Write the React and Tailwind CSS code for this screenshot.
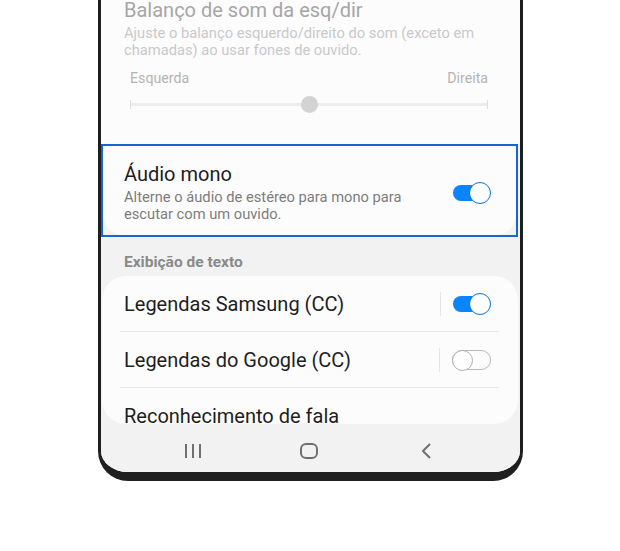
import React from 'react';

const font = { fontFamily: 'Roboto, "Noto Sans", sans-serif' };

function Toggle({ on }) {
    if (on) {
        return (
            <div className="relative w-[38px] h-[22px] shrink-0">
                <div className="absolute left-0 top-[3px] w-[32px] h-[16px] rounded-full bg-[#0a84ff]"></div>
                <div className="absolute right-0 top-0 w-[22px] h-[22px] rounded-full bg-white border-[1.5px] border-[#0873d8]"></div>
            </div>
        );
    }
    return (
        <div className="relative w-[39px] h-[22px] shrink-0">
            <div className="absolute left-0 top-[1px] w-[39px] h-[20px] rounded-full border-[1.5px] border-[#b8b8b8]"></div>
            <div className="absolute left-0 top-[0.5px] w-[21px] h-[21px] rounded-full bg-white border-[1.5px] border-[#b0b0b0]"></div>
        </div>
    );
}

function SwitchRow({ label, on, divider }) {
    return (
        <div className="relative h-[56px] flex items-center pl-[22px] pr-[27px]">
            <div className="flex-1 text-[20px] leading-[24px] text-[#1e1e1e]">{label}</div>
            <div className="w-px h-[24px] bg-[#e6e6e6] mr-[12px]"></div>
            <Toggle on={on} />
            {divider && <div className="absolute bottom-0 left-[18px] right-[19px] h-px bg-[#e8e8e8]"></div>}
        </div>
    );
}

function NavBar() {
    return (
        <div className="h-[48px] bg-[#f2f2f2] flex items-center justify-center pt-[6px] pr-[4px]">
            <svg width="18" height="16" viewBox="0 0 18 16">
                <g stroke="#707070" strokeWidth="2">
                    <line x1="2" y1="1" x2="2" y2="15" />
                    <line x1="9" y1="1" x2="9" y2="15" />
                    <line x1="16" y1="1" x2="16" y2="15" />
                </g>
            </svg>
            <svg className="ml-[98px]" width="18" height="16" viewBox="0 0 18 16">
                <rect x="1" y="1" width="16" height="14" rx="5" fill="none" stroke="#707070" strokeWidth="2" />
            </svg>
            <svg className="ml-[103px]" width="12" height="16" viewBox="0 0 12 16">
                <polyline points="9,1 2,8 9,15" fill="none" stroke="#707070" strokeWidth="2" />
            </svg>
        </div>
    );
}

export default function App() {
    return (
        <div className="w-[620px] h-[551px] bg-white overflow-hidden" style={font}>
            <div className="ml-[98px] w-[425px] h-[481px] border-x-[3px] border-b-[9px] border-[#1f1f1f] rounded-b-[30px] overflow-hidden bg-[#f2f2f2] flex flex-col">
                {/* balance card, greyed out */}
                <div className="bg-[#fcfcfc] h-[144px] shrink-0">
                    <div className="pl-[23px] -mt-[2px] text-[20px] leading-[24px] text-[#a6a6a6]">Balanço de som da esq/dir</div>
                    <div className="pl-[23px] mt-[2.5px] text-[14.7px] leading-[17px] text-[#c9c9c9]">
                        Ajuste o balanço esquerdo/direito do som (exceto em<br />chamadas) ao usar fones de ouvido.
                    </div>
                    <div className="pl-[29px] pr-[32px] mt-[11px]">
                        <div className="flex justify-between text-[14.2px] leading-[17px] text-[#b4b4b4]">
                            <span>Esquerda</span>
                            <span>Direita</span>
                        </div>
                        <div className="relative h-[16px] mt-[9.5px] flex items-center">
                            <div className="w-px h-[9px] bg-[#dedede]"></div>
                            <div className="flex-1 h-[3px] bg-[#ececec]"></div>
                            <div className="w-px h-[9px] bg-[#dedede]"></div>
                            <div className="absolute left-[171px] top-0 w-[17px] h-[17px] rounded-full bg-[#d3d3d3]"></div>
                        </div>
                    </div>
                </div>

                {/* highlighted mono audio card */}
                <div className="h-[93px] shrink-0 border-2 border-[#1865cf] mr-[2px] bg-[#f2f2f2]">
                    <div className="h-full bg-[#fcfcfc] rounded-b-[20px] flex items-center pl-[21px] pr-[25px] pt-[4px]">
                        <div className="flex-1">
                            <div className="text-[20px] leading-[24px] text-[#1c1c1c]">Áudio mono</div>
                            <div className="mt-[3px] text-[14.7px] leading-[17px] text-[#7c7c7c]">
                                Alterne o áudio de estéreo para mono para<br />escutar com um ouvido.
                            </div>
                        </div>
                        <Toggle on />
                    </div>
                </div>

                <div className="pl-[23px] pt-[17px] pb-[5px] text-[15.5px] leading-[17px] font-bold text-[#8a8a8a]">Exibição de texto</div>

                <div className="mx-[1px] mr-[2px] h-[148px] shrink-0 bg-[#fcfcfc] rounded-[24px] overflow-hidden">
                    <SwitchRow label="Legendas Samsung (CC)" on divider />
                    <SwitchRow label="Legendas do Google (CC)" divider />
                    <div className="h-[56px] flex items-center pl-[22px] text-[20px] leading-[24px] text-[#1e1e1e]">Reconhecimento de fala</div>
                </div>

                <NavBar />
            </div>
        </div>
    );
}
